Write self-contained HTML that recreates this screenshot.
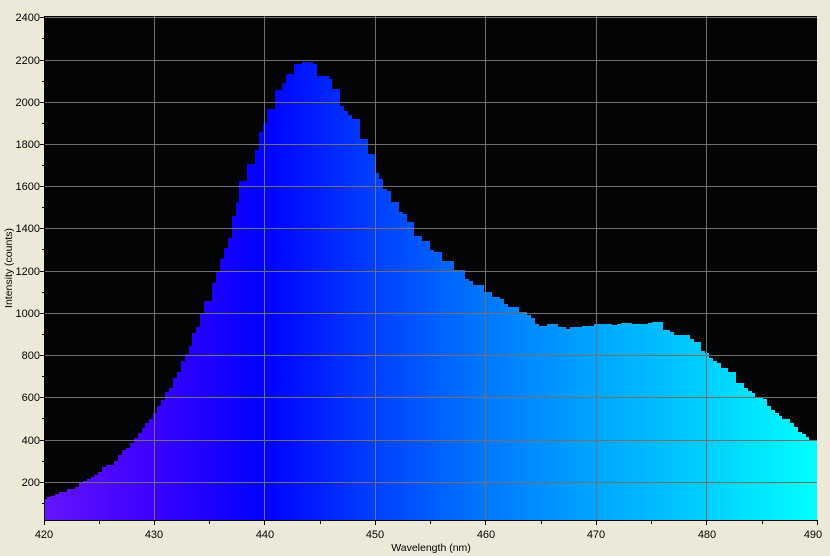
<!DOCTYPE html>
<html><head><style>
html,body{margin:0;padding:0;background:#ece9d8;}
svg{display:block;font-family:"Liberation Sans",sans-serif;font-size:11px;}
</style></head><body>
<svg width="830" height="556" viewBox="0 0 830 556" xmlns="http://www.w3.org/2000/svg">
<defs>
<linearGradient id="g" x1="44" y1="0" x2="817" y2="0" gradientUnits="userSpaceOnUse">
<stop offset="0" stop-color="#6614ff"/>
<stop offset="0.143" stop-color="#3a00ff"/>
<stop offset="0.286" stop-color="#0000ff"/>
<stop offset="0.429" stop-color="#0040ff"/>
<stop offset="0.571" stop-color="#0078ff"/>
<stop offset="0.714" stop-color="#00a6ff"/>
<stop offset="0.857" stop-color="#00cfff"/>
<stop offset="1" stop-color="#00ffff"/>
</linearGradient>
</defs>
<rect x="44" y="16" width="773" height="504" fill="#040306"/>
<g fill="url(#g)" shape-rendering="crispEdges">
<rect x="44" y="499" width="3" height="21"/><rect x="47" y="497" width="4" height="23"/><rect x="51" y="496" width="4" height="24"/><rect x="55" y="494" width="4" height="26"/><rect x="59" y="492" width="8" height="28"/><rect x="67" y="489" width="8" height="31"/><rect x="75" y="487" width="4" height="33"/><rect x="79" y="483" width="4" height="37"/><rect x="83" y="481" width="4" height="39"/><rect x="87" y="479" width="4" height="41"/><rect x="91" y="477" width="3" height="43"/><rect x="94" y="475" width="4" height="45"/><rect x="98" y="472" width="4" height="48"/><rect x="102" y="467" width="4" height="53"/><rect x="106" y="465" width="8" height="55"/><rect x="114" y="461" width="4" height="59"/><rect x="118" y="455" width="4" height="65"/><rect x="122" y="450" width="4" height="70"/><rect x="126" y="448" width="4" height="72"/><rect x="130" y="443" width="4" height="77"/><rect x="134" y="438" width="4" height="82"/><rect x="138" y="433" width="4" height="87"/><rect x="142" y="428" width="3" height="92"/><rect x="145" y="423" width="4" height="97"/><rect x="149" y="419" width="4" height="101"/><rect x="153" y="413" width="4" height="107"/><rect x="157" y="406" width="4" height="114"/><rect x="161" y="400" width="4" height="120"/><rect x="165" y="392" width="4" height="128"/><rect x="169" y="388" width="4" height="132"/><rect x="173" y="378" width="4" height="142"/><rect x="177" y="372" width="4" height="148"/><rect x="181" y="361" width="4" height="159"/><rect x="185" y="354" width="4" height="166"/><rect x="189" y="346" width="3" height="174"/><rect x="192" y="333" width="4" height="187"/><rect x="196" y="327" width="4" height="193"/><rect x="200" y="314" width="4" height="206"/><rect x="204" y="301" width="8" height="219"/><rect x="212" y="283" width="4" height="237"/><rect x="216" y="271" width="4" height="249"/><rect x="220" y="259" width="4" height="261"/><rect x="224" y="248" width="4" height="272"/><rect x="228" y="238" width="4" height="282"/><rect x="232" y="216" width="4" height="304"/><rect x="236" y="202" width="3" height="318"/><rect x="239" y="181" width="8" height="339"/><rect x="247" y="164" width="8" height="356"/><rect x="255" y="150" width="4" height="370"/><rect x="259" y="132" width="4" height="388"/><rect x="263" y="123" width="4" height="397"/><rect x="267" y="109" width="8" height="411"/><rect x="275" y="90" width="7" height="430"/><rect x="282" y="83" width="4" height="437"/><rect x="286" y="74" width="8" height="446"/><rect x="294" y="64" width="8" height="456"/><rect x="302" y="62" width="11" height="458"/><rect x="313" y="64" width="4" height="456"/><rect x="317" y="76" width="12" height="444"/><rect x="329" y="79" width="3" height="441"/><rect x="332" y="89" width="8" height="431"/><rect x="340" y="106" width="4" height="414"/><rect x="344" y="111" width="4" height="409"/><rect x="348" y="115" width="4" height="405"/><rect x="352" y="119" width="8" height="401"/><rect x="360" y="139" width="8" height="381"/><rect x="368" y="154" width="7" height="366"/><rect x="375" y="173" width="4" height="347"/><rect x="379" y="179" width="4" height="341"/><rect x="383" y="189" width="4" height="331"/><rect x="387" y="191" width="4" height="329"/><rect x="391" y="202" width="8" height="318"/><rect x="399" y="212" width="4" height="308"/><rect x="403" y="214" width="4" height="306"/><rect x="407" y="222" width="7" height="298"/><rect x="414" y="236" width="8" height="284"/><rect x="422" y="241" width="8" height="279"/><rect x="430" y="250" width="4" height="270"/><rect x="434" y="252" width="8" height="268"/><rect x="442" y="261" width="12" height="259"/><rect x="454" y="270" width="11" height="250"/><rect x="465" y="279" width="4" height="241"/><rect x="469" y="281" width="4" height="239"/><rect x="473" y="285" width="11" height="235"/><rect x="484" y="292" width="8" height="228"/><rect x="492" y="297" width="8" height="223"/><rect x="500" y="299" width="4" height="221"/><rect x="504" y="304" width="4" height="216"/><rect x="508" y="307" width="11" height="213"/><rect x="519" y="312" width="8" height="208"/><rect x="527" y="315" width="4" height="205"/><rect x="531" y="318" width="4" height="202"/><rect x="535" y="324" width="4" height="196"/><rect x="539" y="326" width="8" height="194"/><rect x="547" y="324" width="11" height="196"/><rect x="558" y="327" width="8" height="193"/><rect x="566" y="329" width="4" height="191"/><rect x="570" y="327" width="12" height="193"/><rect x="582" y="326" width="12" height="194"/><rect x="594" y="324" width="18" height="196"/><rect x="612" y="325" width="5" height="195"/><rect x="617" y="324" width="4" height="196"/><rect x="621" y="323" width="11" height="197"/><rect x="632" y="324" width="16" height="196"/><rect x="648" y="323" width="4" height="197"/><rect x="652" y="322" width="11" height="198"/><rect x="663" y="330" width="7" height="190"/><rect x="670" y="332" width="4" height="188"/><rect x="674" y="335" width="16" height="185"/><rect x="690" y="339" width="4" height="181"/><rect x="694" y="342" width="7" height="178"/><rect x="701" y="351" width="4" height="169"/><rect x="705" y="353" width="4" height="167"/><rect x="709" y="358" width="4" height="162"/><rect x="713" y="361" width="4" height="159"/><rect x="717" y="363" width="4" height="157"/><rect x="721" y="368" width="7" height="152"/><rect x="728" y="372" width="8" height="148"/><rect x="736" y="383" width="8" height="137"/><rect x="744" y="388" width="4" height="132"/><rect x="748" y="391" width="4" height="129"/><rect x="752" y="393" width="3" height="127"/><rect x="755" y="398" width="8" height="122"/><rect x="763" y="399" width="4" height="121"/><rect x="767" y="406" width="4" height="114"/><rect x="771" y="410" width="4" height="110"/><rect x="775" y="413" width="4" height="107"/><rect x="779" y="416" width="3" height="104"/><rect x="782" y="419" width="8" height="101"/><rect x="790" y="423" width="4" height="97"/><rect x="794" y="427" width="4" height="93"/><rect x="798" y="432" width="4" height="88"/><rect x="802" y="434" width="4" height="86"/><rect x="806" y="437" width="3" height="83"/><rect x="809" y="440" width="8" height="80"/>
</g>
<g stroke="#707070" stroke-width="1">
<path d="M44 17.5H817M44 60.5H817M44 102.5H817M44 144.5H817M44 186.5H817M44 228.5H817M44 271.5H817M44 313.5H817M44 355.5H817M44 397.5H817M44 440.5H817M44 482.5H817"/>
<path d="M154.5 16V520M264.5 16V520M375.5 16V520M485.5 16V520M596.5 16V520M706.5 16V520"/>
</g>
<g stroke="#000" stroke-width="1" fill="none">
<path d="M44.5 16V520.5H817.5"/>
<path d="M40 17.5H44M40 60.5H44M40 102.5H44M40 144.5H44M40 186.5H44M40 228.5H44M40 271.5H44M40 313.5H44M40 355.5H44M40 397.5H44M40 440.5H44M40 482.5H44"/>
<path d="M42 38.5H44M42 81.5H44M42 123.5H44M42 165.5H44M42 207.5H44M42 249.5H44M42 292.5H44M42 334.5H44M42 376.5H44M42 418.5H44M42 461.5H44M42 503.5H44"/>
<path d="M44.5 520V525M154.5 520V525M264.5 520V525M375.5 520V525M485.5 520V525M596.5 520V525M706.5 520V525M817.5 520V525"/>
<path d="M99.5 520V524M209.5 520V524M320.5 520V524M430.5 520V524M541.5 520V524M651.5 520V524M762.5 520V524"/>
</g>
<g text-anchor="end" fill="#000">
<text x="40" y="21">2400</text><text x="40" y="64">2200</text><text x="40" y="106">2000</text><text x="40" y="148">1800</text><text x="40" y="190">1600</text><text x="40" y="232">1400</text><text x="40" y="275">1200</text><text x="40" y="317">1000</text><text x="40" y="359">800</text><text x="40" y="401">600</text><text x="40" y="444">400</text><text x="40" y="486">200</text>
</g>
<g text-anchor="middle" fill="#000">
<text x="44" y="538">420</text><text x="154" y="538">430</text><text x="265" y="538">440</text><text x="375" y="538">450</text><text x="486" y="538">460</text><text x="596" y="538">470</text><text x="707" y="538">480</text><text x="813" y="538">490</text>
<text x="431" y="551" font-size="10.5">Wavelength (nm)</text>
<text x="0" y="0" font-size="10.5" transform="translate(12 268) rotate(-90)">Intensity (counts)</text>
</g>
</svg>
</body></html>
